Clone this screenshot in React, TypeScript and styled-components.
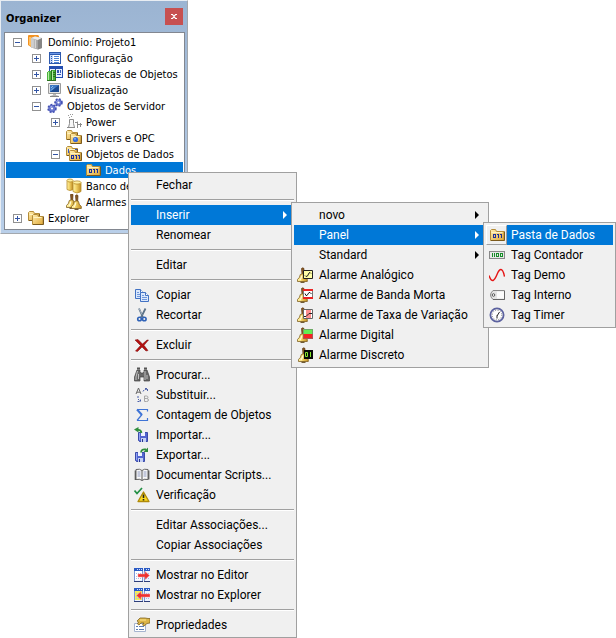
import React from "react";
import styled, { createGlobalStyle, css } from "styled-components";

const GlobalStyle = createGlobalStyle`
  *, *::before, *::after { box-sizing: border-box; }
  html, body { margin: 0; background: #fff; }
  button { font: inherit; color: inherit; border: 0; background: none; padding: 0; }
  ul { list-style: none; margin: 0; padding: 0; }
`;

const treeFont = `Tahoma, "DejaVu Sans Condensed", "Noto Sans", sans-serif`;
const menuFont = `"Segoe UI", Roboto, "Noto Sans", sans-serif`;

/* ---------- Icons ---------- */

const Svg = styled.svg`
  display: block;
  flex: none;
  width: 16px;
  height: 16px;
`;

const Digits = ({ x, y }: { x: number; y: number }) => (
  <g fill="none" stroke="#1c2f9c" shapeRendering="crispEdges">
    <rect x={x + 0.5} y={y + 0.5} width="2" height="3" />
    <path d={`M${x + 4} ${y + 0.5}h2M${x + 5.5} ${y}v4M${x + 7} ${y + 0.5}h2M${x + 8.5} ${y}v4`} />
  </g>
);

const Folder = ({ x = 0, y = 0, w = 14, h = 11 }: { x?: number; y?: number; w?: number; h?: number }) => (
  <g>
    <path
      d={`M${x + 0.5} ${y + h - 0.5}v${-h + 2}l1-1h4l1 2h${w - 7.5}v${h - 3}z`}
      fill="url(#folderFill)"
      stroke="#b58d38"
    />
    <path d={`M${x + 1.5} ${y + 3.5}h${w - 4}`} stroke="#fff3c0" />
    <path d={`M${x + 1} ${y + h - 0.5}h${w - 1.5}v${-h + 3}`} fill="none" stroke="#7c5a1c" />
  </g>
);

const Bell = ({ x = 0, y = 0 }: { x?: number; y?: number }) => (
  <g transform={`translate(${x} ${y})`}>
    <path d="M4.500 1.500q1.200-1.300 2.500 0l-.3 5.500H5z" fill="#8a5a24" stroke="#5c3510" strokeWidth=".7" />
    <path d="M3.300 7.500q2-1.400 4.200 0 .2 3.200 2.800 5v2H.500v-2q2.500-1.800 2.800-5z" fill="url(#goldFill)" stroke="#806020" strokeWidth=".8" />
    <path d="M4.800 8.500Q4.500 11 3 13" stroke="#fffbd8" strokeWidth="1.300" fill="none" />
    <path d="M3.500 15.300h4" stroke="#50380c" />
  </g>
);

const Floppy = ({ x, y }: { x: number; y: number }) => (
  <g transform={`translate(${x} ${y})`}>
    <path d="M.5.500h9v9h-8l-1-1z" fill="#5265cf" stroke="#3a4ba8" />
    <path d="M3 0h4v4H3z" fill="#eef2ff" />
    <path d="M3 6h5v4H3z" fill="#c5d0f2" />
    <path d="M4 7h1v3H4z" fill="#26358d" />
    <path d="M1.500 1v7" stroke="#91a1f3" />
  </g>
);

const Gear = ({ x, y, r }: { x: number; y: number; r: number }) => (
  <g>
    <circle cx={x} cy={y} r={r} fill="#5c68c4" stroke="#4552b4" strokeWidth="2" strokeDasharray="1.800 1.300" />
    <circle cx={x} cy={y} r={r - 0.8} fill="#6a78cf" />
    <path d={`M${x - 2} ${y - 1}l2-1.500`} stroke="#aab6f3" />
    <circle cx={x} cy={y} r="1.100" fill="#fff" />
  </g>
);

const Page = ({ x, y }: { x: number; y: number }) => (
  <g transform={`translate(${x} ${y})`}>
    <path d="M.5.500h5l3 3v6h-8z" fill="#dbe8fc" stroke="#4272c3" />
    <path d="M5.500.500v3h3" fill="#fff" stroke="#4272c3" />
    <path d="M2 3.500h2M2 5.500h5M2 7.500h5" stroke="#6f97dc" />
  </g>
);

const WindowPair = ({ yellow = false }: { yellow?: boolean }) => (
  <g shapeRendering="crispEdges">
    <path d="M0 1h9v13H0zM10 1h6v13h-6z" fill="#eef3ff" />
    <path d="M1 4h7v9H1z" fill={yellow ? "#f4ef58" : "#fff"} />
    <path d="M0 1h9v3H0zM10 1h6v3h-6z" fill="#2b5bc4" />
    <path d="M3 2h1v1H3zM5 2h1v1H5zM7 2h1v1H7zM12 2h1v1h-1zM14 2h1v1h-1z" fill="#cfdcff" />
    <path d="M.5 4v10M8.500 4v10M10.500 4v10" stroke="#7c96d6" />
    <path d="M0 14.500h9M10 14.500h6" stroke="#2e3e78" />
    <path d="M2 6.500h6M2 9.500h6M2 11.500h6M12 6.500h4M12 11.500h4" stroke="#a9bbe4" strokeDasharray="1 1" />
  </g>
);

const drawings = {
  domain: (
    <>
      <path d="M0 2q0-1 1-1h9l1 1v10l-8 1-3-2z" fill="#f39221" />
      <path d="M1 3h2v9l-2-1z" fill="#ffc062" />
      <path d="M3 4l4-1.500 7 1.500v10l-4 1.500-7-2z" fill="#b7b7b7" />
      <path d="M3 4l7 2v9.500l-7-2z" fill="url(#grayFill)" />
      <path d="M3 4l4-1.500 7 1.500-4 2z" fill="#ededed" />
      <path d="M10 6l4-2v10l-4 1.500z" fill="#858585" />
      <path d="M5 5.500v8M7.500 6v8" stroke="#dedede" strokeWidth=".8" />
    </>
  ),
  config: (
    <g shapeRendering="crispEdges">
      <path d="M2 2h12v12H2z" fill="#2d59ad" />
      <path d="M3 5h10v8H3z" fill="#fff" />
      <path d="M3 3h10v1H3z" fill="#6d99e8" />
      <path d="M3 5h3v8H3z" fill="#c4d8fb" />
      <path d="M4 6.500h1M4 8.500h1M4 10.500h1M4 12.500h1" stroke="#2d59ad" />
      <path d="M7 6.500h5M7 8.500h5M7 10.500h5M7 12.500h5" stroke="#4d83d5" />
    </g>
  ),
  library: (
    <g shapeRendering="crispEdges">
      <path d="M2 0h14v12H2z" fill="#244db0" />
      <path d="M3 3h5v7H3zM9 3h6v8H9z" fill="#e8efff" />
      <path d="M10 4h2v3h-2zM13 4h1v3h-1zM10 8h4v1h-4z" fill="#3559b4" />
      <path d="M0 6l1-1h3v10H0zM4 4h5v11H4z" fill="#4cb33d" />
      <path d="M1 6h1v8H1zM5 5h1v9H5z" fill="#b4eea4" />
      <path d="M4.500 4v11M8.500 4v11M0 14.500h9M6 6.500h2M6 8.500h2M6 10.500h2" stroke="#2a7420" />
    </g>
  ),
  monitor: (
    <>
      <path d="M1.500 1.500h12v10h-12z" fill="#e6e6e6" stroke="#9b9b9b" />
      <path d="M3 3h9v7H3z" fill="#3d78c4" />
      <path d="M3 10l9-7v7z" fill="#1c4b93" />
      <path d="M4 6l2-2M4 8.500l3-3" stroke="#8fc0f0" />
      <path d="M6 12h3v1l3 1v1H3v-1l3-1z" fill="#b8b8b8" />
      <path d="M3 14.500h9" stroke="#858585" />
    </>
  ),
  gears: (
    <>
      <Gear x={5} y={10.500} r={3.700} />
      <Gear x={11.500} y={4.500} r={3.300} />
    </>
  ),
  power: (
    <g fill="none" stroke="#8b8b8b">
      <path d="M2.500 13.500l1-4v-4h4v4l1 4z" fill="#f7f7f7" />
      <path d="M1 13.500h8M11.500 14V7.500M14.500 13V9M9 8.500h3M12 10.500h4" />
      <path d="M2 1.500h1M4 .500h1M3 3.500h1M5 2.500h1M6 .500h1" shapeRendering="crispEdges" stroke="#999" />
    </g>
  ),
  drivers: (
    <>
      <Folder x={0} y={0} w={12} h={10} />
      <Folder x={4} y={3} w={12} h={11} />
      <circle cx="9.500" cy="9.500" r="2.600" fill="#376bd7" />
      <circle cx="9" cy="8.800" r=".9" fill="#8fb7ff" />
    </>
  ),
  dataFolders: (
    <>
      <Folder x={0} y={0} w={12} h={10} />
      <path d="M2 3h1v4H2zM9 3h2v1H9z" fill="#3656c0" />
      <Folder x={3} y={4} w={13} h={11} />
      <Digits x={5} y={9} />
    </>
  ),
  dataFolder: (
    <>
      <Folder x={1} y={2} w={15} h={12} />
      <Digits x={4} y={7} />
    </>
  ),
  database: (
    <g stroke="#b88d2c" strokeWidth=".8">
      <path d="M1 2.500v9q3 2 6 0v-9" fill="url(#goldFill)" />
      <ellipse cx="4" cy="2.500" rx="3" ry="1.500" fill="#fff1a0" />
      <path d="M7 4.500v9q4 3 8 0v-9" fill="url(#goldFill)" />
      <ellipse cx="11" cy="4.500" rx="4" ry="1.600" fill="#fff1a0" />
    </g>
  ),
  bells: (
    <>
      <Bell x={0} y={-1} />
      <Bell x={5} y={0} />
    </>
  ),
  explorer: (
    <>
      <Folder x={0} y={1} w={12} h={10} />
      <Folder x={4} y={4} w={12} h={11} />
    </>
  ),
  copy: (
    <>
      <Page x={1} y={2} />
      <Page x={6} y={5} />
    </>
  ),
  cut: (
    <>
      <path d="M5 1.500l4 9M11.500 1.500l-4.500 9" stroke="#5c7389" strokeWidth="1.800" />
      <path d="M5 1.500l3 6" stroke="#bdc9d6" strokeWidth=".7" />
      <circle cx="5.500" cy="12" r="1.800" fill="none" stroke="#2f62b7" strokeWidth="1.600" />
      <circle cx="10.300" cy="12" r="1.800" fill="none" stroke="#2f62b7" strokeWidth="1.600" />
    </>
  ),
  remove: (
    <path
      d="M1 3l3-.5 4.500 4.500L13 3h1.500L10 8.300l4 5.200-2 .5-4-4-4.500 4.500L1.500 14l5-5.500z"
      fill="#b30f0f"
      stroke="#7d0808"
      strokeWidth=".5"
    />
  ),
  find: (
    <>
      <path d="M3 3h3v2l1 1h2l1-1V3h3l2.500 7v4H10v-4H6v4H.500v-4z" fill="#686868" stroke="#444" strokeWidth=".7" />
      <path d="M3.500 4L2 10v3M11 4v9M4.500 7v5M13 8v4" stroke="#c0c0c0" fill="none" />
      <path d="M3 1.500h3M10 1.500h3" stroke="#555" strokeWidth="2" />
    </>
  ),
  replace: (
    <g fill="none" stroke="#666">
      <path d="M2 7l2.500-6L7 7M3 5.200h3" />
      <path d="M10.500 9v5.500h2q2 0 2-1.500t-2-1.500h-2M12.500 11.500q1.500 0 1.500-1.200T12.500 9h-2" stroke="#a6a6a6" />
      <path d="M9 4.500l1-1.500 3-1M11 1.500h2.500V4M4 9v3l2 2M3.500 14.500h3V12" stroke="#4d60a8" strokeDasharray="2 1" />
    </g>
  ),
  sigma: (
    <g fill="none" stroke="#3f74d6">
      <path d="M13.500 4.500V2.500H3M3 13.500h10.500V11" strokeWidth="1.200" />
      <path d="M3 2.500L8 8" strokeWidth="2" />
      <path d="M8 7.500l-5 6" strokeWidth="1.200" />
    </g>
  ),
  importFile: (
    <>
      <Floppy x={4} y={5} />
      <path d="M7.500 6q-.5-3.500-4-3" fill="none" stroke="#2f8e3c" strokeWidth="1.800" />
      <path d="M4.500 0v5.500L0 2.500z" fill="#2f8e3c" />
    </>
  ),
  exportFile: (
    <>
      <Floppy x={1} y={5} />
      <path d="M7 5.500q.5-4 5-3" fill="none" stroke="#2f8e3c" strokeWidth="1.800" />
      <path d="M9.500 5H14V.5z" fill="#2f8e3c" />
    </>
  ),
  book: (
    <>
      <path d="M.7 3.500h1.600v9h5.700l.7 1 .7-1h6V3.500h-1.500v9.500H.700z" fill="#555" />
      <path d="M2 2.500q4-1 6 1 2-2 6-1v10q-4-1-6 1-2-2-6-1z" fill="#f8f8f8" stroke="#666" />
      <path d="M8 3.500v10" stroke="#555" />
      <path d="M3.500 5h3M3.500 7h3M3.500 9h3M9.500 5h3M9.500 7h3M9.500 9h3" stroke="#8f9ac0" />
    </>
  ),
  verify: (
    <>
      <path d="M9.500 5l5.500 9.500H4z" fill="#f9d822" stroke="#b08a08" strokeWidth="1.300" strokeLinejoin="round" />
      <path d="M9.500 7.500v3.500M9.500 12v1.500" stroke="#222" strokeWidth="1.600" />
      <path d="M.5 3.500l2.500 3 5-5.500" fill="none" stroke="#218f43" strokeWidth="1.700" />
    </>
  ),
  toEditor: (
    <>
      <WindowPair />
      <path d="M4 7h7V4.500l4.500 4-4.500 4V10H4z" fill="#ed3030" stroke="#ff9696" strokeWidth=".5" />
    </>
  ),
  toExplorer: (
    <>
      <WindowPair yellow />
      <path d="M16 7H7V4.500l-4.500 4 4.500 4V10h9z" fill="#ed3030" stroke="#ff9696" strokeWidth=".5" />
    </>
  ),
  properties: (
    <>
      <path d="M.5 6.500h11v8H.500z" fill="#fff" stroke="#a5b4cf" />
      <path d="M2 9.500h2M5 9.500h5M2 12.500h2M5 12.500h5" stroke="#5d7eb4" />
      <path d="M3 4l3-3h5l3 .5h2V6l-3 .500L10 9 8.500 8 10 6H7L5 8 3.500 7l1-2z" fill="#dcb548" stroke="#735612" strokeWidth=".7" />
      <path d="M6 3h6" stroke="#ffe78c" />
    </>
  ),
  alarmAnalog: (
    <>
      <Bell />
      <path d="M6.500 3.500h9v8h-9z" fill="#ffffa6" stroke="#222" />
      <path d="M8 8.500l1 1 1.500-.500 1.500-3 1-.500 1 1" fill="none" stroke="#222" />
    </>
  ),
  alarmBand: (
    <>
      <Bell />
      <path d="M6.500 2.500h9v9h-9z" fill="#fff" stroke="#777" />
      <path d="M6 3h10M6 11h10" stroke="#ea2525" strokeWidth="2" />
      <path d="M8 6.500l1 2h1l2-3h1l1.500 1.500" fill="none" stroke="#222" />
    </>
  ),
  alarmRate: (
    <>
      <Bell />
      <path d="M6.500 2.500h9v9h-9z" fill="#fff" stroke="#666" />
      <path d="M9 3h5v8H9z" fill="#ff8f8f" />
      <path d="M7 9.500h2l3-3h3" fill="none" stroke="#222" />
    </>
  ),
  alarmDigital: (
    <>
      <Bell />
      <path d="M6 2h10v5H6z" fill="#63ee52" />
      <path d="M6 7h10v5H6z" fill="#f62323" />
      <path d="M6.500 2.500h9v9h-9z" fill="none" stroke="#777" strokeWidth=".6" />
    </>
  ),
  alarmDiscrete: (
    <>
      <Bell x={1} />
      <path d="M7 3h9v9H7z" fill="#080808" />
      <path d="M8.500 5.500h2v4h-2zM13.500 5v5" fill="none" stroke="#82e62b" />
    </>
  ),
  counter: (
    <g shapeRendering="crispEdges">
      <path d="M0 4h16v8H0z" fill="#888" />
      <path d="M1 5h14v6H1z" fill="#e6e6e6" />
      <path d="M3.500 6v4M5.500 6v4" stroke="#168c28" />
      <path d="M7.500 6.500h2v3h-2zM11.500 6.500h2v3h-2z" fill="none" stroke="#168c28" />
    </g>
  ),
  demo: <path d="M0 8.500q2 5.500 4 5 2-1 4-6 2-5 4-5 2 0 3.500 7" fill="none" stroke="#e51616" strokeWidth="1.400" />,
  internal: (
    <>
      <path d="M4 3.500h11.500v9H4q-2.500-2.500-2.500-4.500T4 3.500z" fill="#e4e4e4" stroke="#888" />
      <path d="M8 4.500h7v7H8z" fill="#fbfbfb" />
      <path d="M4 12.500h11.500V4" fill="none" stroke="#666" />
      <circle cx="4.500" cy="8" r="1.300" fill="#fff" stroke="#555" />
    </>
  ),
  timer: (
    <>
      <circle cx="8" cy="8" r="6.600" fill="#fff" stroke="#5c629f" strokeWidth="1.800" />
      <circle cx="8" cy="8" r="4.800" fill="none" stroke="#777" strokeDasharray="1 1.513" />
      <path d="M8 9l2.500-4M8 8.500v3" fill="none" stroke="#222" />
    </>
  ),
};

type IconName = keyof typeof drawings;

const Icon = ({ name }: { name: IconName }) => (
  <Svg viewBox="0 0 16 16" aria-hidden="true">
    {drawings[name]}
  </Svg>
);

const Defs = styled.svg`
  position: absolute;
  width: 0;
  height: 0;
`;

const Gradients = () => (
  <Defs aria-hidden="true">
    <defs>
      <linearGradient id="folderFill" x1="0" y1="0" x2="1" y2="1">
        <stop offset="0" stopColor="#ffeeb0" />
        <stop offset="1" stopColor="#e0a838" />
      </linearGradient>
      <linearGradient id="goldFill">
        <stop offset="0" stopColor="#fff2a6" />
        <stop offset=".4" stopColor="#f3d468" />
        <stop offset="1" stopColor="#c08c22" />
      </linearGradient>
      <linearGradient id="grayFill">
        <stop offset="0" stopColor="#cfcfcf" />
        <stop offset="1" stopColor="#a0a0a0" />
      </linearGradient>
    </defs>
  </Defs>
);

/* ---------- Organizer window ---------- */

const Workspace = styled.main`
  position: relative;
  display: flex;
  align-items: flex-start;
  min-height: 100vh;
`;

const OrganizerWindow = styled.section`
  display: flex;
  flex-direction: column;
  flex: 0 1 188px;
  padding: 0 2px 3px 3px;
  border: 1px solid #a3a8ae;
  border-top-color: #e8edf3;
  border-left-color: #e8edf3;
  background: linear-gradient(#9bb4d2, #b9cfe9);
`;

const TitleBar = styled.header`
  display: flex;
  align-items: center;
  justify-content: space-between;
  height: 31px;
  padding: 0 2px;
`;

const Title = styled.h1`
  margin: 0;
  padding-top: 4px;
  font: bold 11px/16px ${treeFont};
  color: #000;
`;

const CloseButton = styled.button`
  display: grid;
  place-items: center;
  width: 18px;
  height: 17px;
  background: #c75050;
`;

const TreePanel = styled.div`
  padding: 1px 1px 3px;
  border: 1px solid #828790;
  background: #fff;
  font: 11px/16px ${treeFont};
  color: #000;
`;

const TreeRow = styled.li<{ $level: number; $selected?: boolean }>`
  display: flex;
  align-items: center;
  gap: 6px;
  height: 16px;
  padding-left: ${(p) => 7 + p.$level * 19}px;
  white-space: nowrap;
  ${(p) =>
    p.$selected &&
    css`
      background: #0078d7;
      color: #fff;
    `}
`;

const ExpanderSlot = styled.span`
  display: flex;
  flex: none;
  width: 9px;
`;

const Expander = styled.button`
  width: 9px;
  height: 9px;
  svg {
    display: block;
  }
`;

const Node = styled.span`
  display: flex;
  gap: 4px;
  height: 16px;
`;

const NodeText = styled.span`
  padding-top: 1px;
`;

type TreeNode = { label: string; icon: IconName; level: number; sign?: "+" | "-"; selected?: boolean };

const nodes: TreeNode[] = [
  { label: "Domínio: Projeto1", icon: "domain", level: 0, sign: "-" },
  { label: "Configuração", icon: "config", level: 1, sign: "+" },
  { label: "Bibliotecas de Objetos", icon: "library", level: 1, sign: "+" },
  { label: "Visualização", icon: "monitor", level: 1, sign: "+" },
  { label: "Objetos de Servidor", icon: "gears", level: 1, sign: "-" },
  { label: "Power", icon: "power", level: 2, sign: "+" },
  { label: "Drivers e OPC", icon: "drivers", level: 2 },
  { label: "Objetos de Dados", icon: "dataFolders", level: 2, sign: "-" },
  { label: "Dados", icon: "dataFolder", level: 3, selected: true },
  { label: "Banco de Dados", icon: "database", level: 2 },
  { label: "Alarmes", icon: "bells", level: 2 },
  { label: "Explorer", icon: "explorer", level: 0, sign: "+" },
];

const Organizer = () => (
  <OrganizerWindow>
    <TitleBar>
      <Title>Organizer</Title>
      <CloseButton aria-label="Fechar janela">
        <svg width="6" height="5" viewBox="0 0 6 5">
          <path d="M1 0l4 5M5 0L1 5M0 .5h2M4 .5h2M0 4.500h2M4 4.500h2" stroke="#fff" strokeWidth="1.200" />
        </svg>
      </CloseButton>
    </TitleBar>
    <TreePanel>
      <ul role="tree" aria-label="Organizer">
        {nodes.map((n) => (
          <TreeRow
            key={n.label}
            role="treeitem"
            aria-level={n.level + 1}
            aria-selected={!!n.selected}
            aria-expanded={n.sign ? n.sign === "-" : undefined}
            $level={n.level}
            $selected={n.selected}
          >
            <ExpanderSlot>
              {n.sign && (
                <Expander aria-label={n.sign === "+" ? "Expandir" : "Recolher"}>
                  <svg width="9" height="9" viewBox="0 0 9 9" shapeRendering="crispEdges">
                    <rect x=".5" y=".5" width="8" height="8" fill="#fff" stroke="#919191" />
                    <path d={n.sign === "+" ? "M2 4.500h5M4.500 2v5" : "M2 4.500h5"} stroke="#3355a5" />
                  </svg>
                </Expander>
              )}
            </ExpanderSlot>
            <Node>
              <Icon name={n.icon} />
              <NodeText>{n.label}</NodeText>
            </Node>
          </TreeRow>
        ))}
      </ul>
    </TreePanel>
  </OrganizerWindow>
);

/* ---------- Menus ---------- */

const MenuPanel = styled.ul<{ $minWidth: number }>`
  min-width: ${(p) => p.$minWidth}px;
  padding: 2px;
  border: 1px solid #a0a0a0;
  background: #f0f0f0;
  font: 12px/20px ${menuFont};
  color: #000;
`;

const MenuAnchor = styled.div`
  position: absolute;
  left: 128px;
  top: 172px;
`;

const SubmenuAnchor = styled.div`
  position: absolute;
  left: calc(100% - 3px);
  top: -3px;
  z-index: 1;
`;

const MenuEntry = styled.li`
  position: relative;
`;

const MenuButton = styled.button<{ $active?: boolean }>`
  display: flex;
  align-items: center;
  width: 100%;
  height: 20px;
  text-align: left;
  white-space: nowrap;
  ${(p) =>
    p.$active &&
    css`
      background: #0078d7;
      color: #fff;
    `}
`;

const IconCell = styled.span<{ $raised?: boolean }>`
  display: grid;
  place-items: center;
  flex: none;
  width: 21px;
  height: 20px;
  ${(p) =>
    p.$raised &&
    css`
      background: #f0f0f0;
      border: 1px solid;
      border-color: #fff #a0a0a0 #a0a0a0 #fff;
    `}
`;

const MenuLabel = styled.span`
  flex: 1;
  padding-left: 4px;
`;

const Arrow = styled.span`
  width: 0;
  height: 0;
  margin-right: 7px;
  border: 4px solid transparent;
  border-left-color: currentColor;
  border-right-width: 0;
`;

const Separator = styled.li`
  height: 2px;
  margin: 4px 0;
  border-top: 1px solid #a0a0a0;
  border-bottom: 1px solid #fff;
`;

type MenuItem =
  | "separator"
  | { label: string; icon?: IconName; active?: boolean; submenu?: boolean; children?: React.ReactNode };

const Menu = ({ items, label, minWidth }: { items: MenuItem[]; label: string; minWidth: number }) => (
  <MenuPanel role="menu" aria-label={label} $minWidth={minWidth}>
    {items.map((item, i) =>
      item === "separator" ? (
        <Separator key={i} role="separator" />
      ) : (
        <MenuEntry key={item.label} role="none">
          <MenuButton
            role="menuitem"
            aria-haspopup={item.submenu ? "menu" : undefined}
            aria-expanded={item.submenu ? !!item.children : undefined}
            $active={item.active}
          >
            <IconCell $raised={item.active && !!item.icon}>{item.icon && <Icon name={item.icon} />}</IconCell>
            <MenuLabel>{item.label}</MenuLabel>
            {item.submenu && <Arrow />}
          </MenuButton>
          {item.children && <SubmenuAnchor>{item.children}</SubmenuAnchor>}
        </MenuEntry>
      )
    )}
  </MenuPanel>
);

const panelItems: MenuItem[] = [
  { label: "Pasta de Dados", icon: "dataFolder", active: true },
  { label: "Tag Contador", icon: "counter" },
  { label: "Tag Demo", icon: "demo" },
  { label: "Tag Interno", icon: "internal" },
  { label: "Tag Timer", icon: "timer" },
];

const insertItems: MenuItem[] = [
  { label: "novo", submenu: true },
  {
    label: "Panel",
    submenu: true,
    active: true,
    children: <Menu label="Panel" items={panelItems} minWidth={133} />,
  },
  { label: "Standard", submenu: true },
  { label: "Alarme Analógico", icon: "alarmAnalog" },
  { label: "Alarme de Banda Morta", icon: "alarmBand" },
  { label: "Alarme de Taxa de Variação", icon: "alarmRate" },
  { label: "Alarme Digital", icon: "alarmDigital" },
  { label: "Alarme Discreto", icon: "alarmDiscrete" },
];

const contextItems: MenuItem[] = [
  { label: "Fechar" },
  "separator",
  {
    label: "Inserir",
    submenu: true,
    active: true,
    children: <Menu label="Inserir" items={insertItems} minWidth={198} />,
  },
  { label: "Renomear" },
  "separator",
  { label: "Editar" },
  "separator",
  { label: "Copiar", icon: "copy" },
  { label: "Recortar", icon: "cut" },
  "separator",
  { label: "Excluir", icon: "remove" },
  "separator",
  { label: "Procurar...", icon: "find" },
  { label: "Substituir...", icon: "replace" },
  { label: "Contagem de Objetos", icon: "sigma" },
  { label: "Importar...", icon: "importFile" },
  { label: "Exportar...", icon: "exportFile" },
  { label: "Documentar Scripts...", icon: "book" },
  { label: "Verificação", icon: "verify" },
  "separator",
  { label: "Editar Associações..." },
  { label: "Copiar Associações" },
  "separator",
  { label: "Mostrar no Editor", icon: "toEditor" },
  { label: "Mostrar no Explorer", icon: "toExplorer" },
  "separator",
  { label: "Propriedades", icon: "properties" },
];

export default function App() {
  return (
    <Workspace>
      <GlobalStyle />
      <Gradients />
      <Organizer />
      <MenuAnchor>
        <Menu label="Dados" items={contextItems} minWidth={169} />
      </MenuAnchor>
    </Workspace>
  );
}
